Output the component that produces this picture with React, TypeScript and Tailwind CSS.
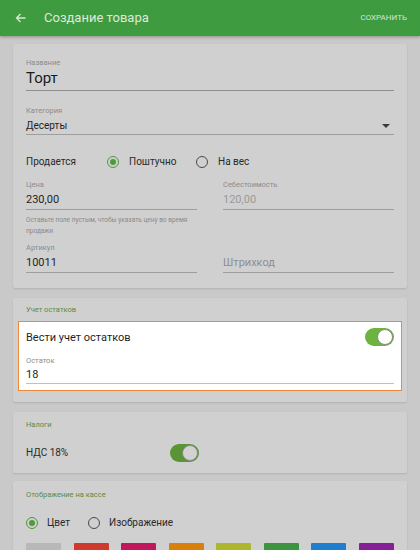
import React from 'react';

const Field = ({ label, value, muted }: { label: string; value: string; muted?: boolean }) => (
  <div>
    <div className="text-[7.5px] leading-[9px] text-[#8c8c8c]">{label}</div>
    <div className={`mt-[4px] text-[11px] leading-[13px] ${muted ? 'text-[#9a9a9a]' : 'text-[#1f1f1f]'}`}>{value}</div>
    <div className="mt-[3px] h-px bg-[#9e9e9e]" />
  </div>
);

const Radio = ({ checked }: { checked?: boolean }) => (
  <span
    className={`flex h-[12px] w-[12px] shrink-0 items-center justify-center rounded-full border-[1.5px] ${
      checked ? 'border-[#4f9a3a]' : 'border-[#4a4a4a]'
    }`}
  >
    {checked && <span className="h-[6px] w-[6px] rounded-full bg-[#4f9a3a]" />}
  </span>
);

const Toggle = ({ bright }: { bright?: boolean }) => (
  <span className={`relative flex h-[18px] w-[29px] items-center rounded-full ${bright ? 'bg-[#6cb33f]' : 'bg-[#5a9535]'}`}>
    <span
      className={`absolute right-[1px] h-[16px] w-[16px] rounded-full border border-[#8a8a8a] ${
        bright ? 'bg-white' : 'bg-[#d2d2d2]'
      }`}
    />
  </span>
);

const swatches = ['#b8b8b8', '#cc3b2e', '#c0185a', '#d97f0c', '#adb62f', '#3d9440', '#1f7fce', '#862096'];

export default function App() {
  return (
    <div className="h-[550px] w-[420px] overflow-hidden bg-[#c9c9c9] font-['Roboto',sans-serif]">
      <div className="flex h-[36px] items-center bg-[#3f9b40] px-[15px] shadow-[0_1px_3px_rgba(0,0,0,0.3)]">
        <svg width="12" height="12" viewBox="0 0 24 24" fill="none" stroke="#d8e8d4" strokeWidth="2.6">
          <path d="M21 12H4M11 4l-8 8 8 8" />
        </svg>
        <span className="ml-[17px] text-[13px] text-[#dfe9dc]">Создание товара</span>
        <span className="ml-auto mr-[-2px] text-[8px] text-[#d6e4d2]">СОХРАНИТЬ</span>
      </div>

      <div className="flex flex-col px-[13px] pt-[8px]">
        {/* main card */}
        <div className="rounded-[2px] bg-[#d0d0d0] px-[13px] pb-[15px] pt-[14px] shadow-[0_1px_2px_rgba(0,0,0,0.12)]">
          <div className="text-[7.5px] leading-[9px] text-[#8c8c8c]">Название</div>
          <div className="mt-[2px] text-[15px] leading-[18px] text-[#1a1a1a]">Торт</div>
          <div className="mt-[3px] h-px bg-[#8e8e8e]" />

          <div className="mt-[15px] text-[7.5px] leading-[9px] text-[#8c8c8c]">Категория</div>
          <div className="mt-[5px] flex items-center justify-between">
            <span className="text-[10px] leading-[12px] text-[#1f1f1f]">Десерты</span>
            <span className="mr-[4px] h-0 w-0 border-x-[4px] border-t-[4px] border-x-transparent border-t-[#3a3a3a]" />
          </div>
          <div className="mt-[2px] h-px bg-[#9e9e9e]" />

          <div className="mt-[21px] flex h-[12px] items-center text-[10px] leading-[12px] text-[#2a2a2a]">
            <span className="w-[81px]">Продается</span>
            <Radio checked />
            <span className="ml-[10px] w-[67px]">Поштучно</span>
            <Radio />
            <span className="ml-[10px]">На вес</span>
          </div>

          <div className="mt-[12px] grid grid-cols-2 gap-x-[26px]">
            <Field label="Цена" value="230,00" />
            <Field label="Себестоимость" value="120,00" muted />
          </div>
          <div className="mt-[5px] w-[175px] text-[6.5px] leading-[11px] text-[#8a8a8a]">
            Оставьте поле пустым, чтобы указать цену во время продажи
          </div>

          <div className="mt-[6px] grid grid-cols-2 gap-x-[26px]">
            <Field label="Артикул" value="10011" />
            <div className="flex flex-col justify-end">
              <div className="text-[11px] leading-[13px] text-[#8e8e8e]">Штрихкод</div>
              <div className="mt-[3px] h-px bg-[#9e9e9e]" />
            </div>
          </div>
        </div>

        {/* stock card */}
        <div className="mt-[10px] rounded-[2px] bg-[#d0d0d0] px-[5px] pb-[11px] pt-[7px] shadow-[0_1px_2px_rgba(0,0,0,0.12)]">
          <div className="px-[8px] text-[7.5px] leading-[10px] text-[#5d8a40]">Учет остатков</div>
          <div className="mt-[6px] border-[1.5px] border-[#ef8a3c] bg-white px-[7px] pb-[6px] pt-[6px]">
            <div className="flex h-[18px] items-center justify-between">
              <span className="text-[11px] leading-[13px] text-[#1f1f1f]">Вести учет остатков</span>
              <Toggle bright />
            </div>
            <div className="mt-[10px] text-[7.5px] leading-[9px] text-[#8c8c8c]">Остаток</div>
            <div className="mt-[3px] text-[11px] leading-[13px] text-[#1f1f1f]">18</div>
            <div className="mt-[2px] h-px bg-[#c0c0c0]" />
          </div>
        </div>

        {/* tax card */}
        <div className="mt-[10px] rounded-[2px] bg-[#d0d0d0] px-[13px] pb-[11px] pt-[8px] shadow-[0_1px_2px_rgba(0,0,0,0.12)]">
          <div className="text-[7.5px] leading-[10px] text-[#5d8a40]">Налоги</div>
          <div className="mt-[14px] flex h-[18px] items-center">
            <span className="w-[144px] text-[10px] leading-[12px] text-[#2a2a2a]">НДС 18%</span>
            <Toggle />
          </div>
        </div>

        {/* display card */}
        <div className="mt-[8px] rounded-[2px] bg-[#d0d0d0] px-[13px] pb-[10px] pt-[9px] shadow-[0_1px_2px_rgba(0,0,0,0.12)]">
          <div className="text-[7.5px] leading-[10px] text-[#5d8a40]">Отображение на кассе</div>
          <div className="mt-[17px] flex h-[12px] items-center text-[10px] leading-[12px] text-[#2a2a2a]">
            <Radio checked />
            <span className="ml-[9px] w-[41px]">Цвет</span>
            <Radio />
            <span className="ml-[9px]">Изображение</span>
          </div>
          <div className="mt-[14px] flex justify-between">
            {swatches.map((c) => (
              <div key={c} className="h-[20px] w-[35px] rounded-[1px]" style={{ backgroundColor: c }} />
            ))}
          </div>
        </div>
      </div>
    </div>
  );
}
